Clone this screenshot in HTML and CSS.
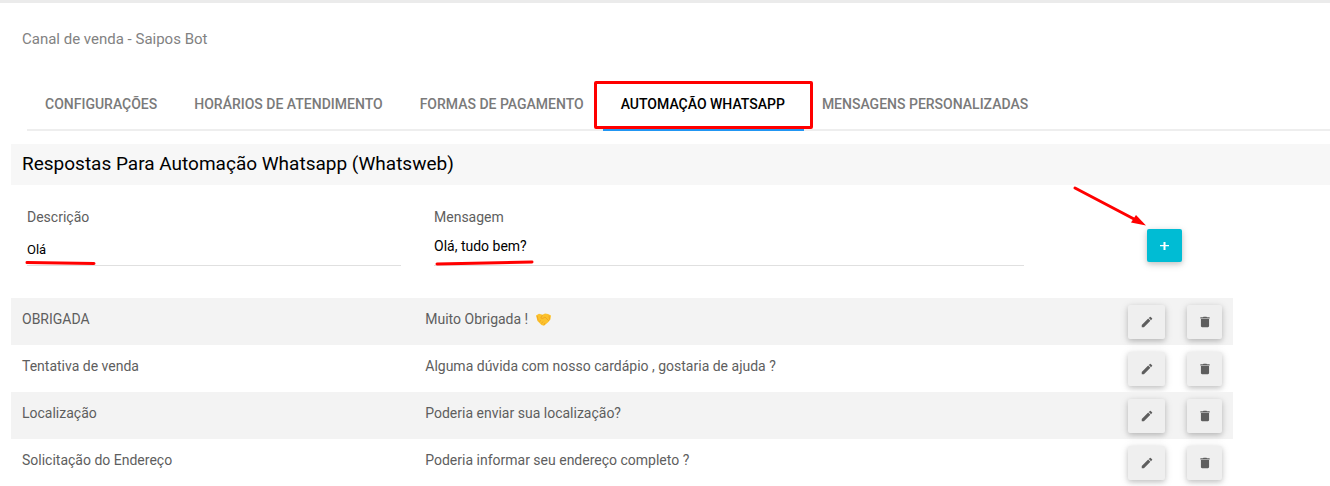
FILE: index.html
```html
<!DOCTYPE html>
<html lang="pt-BR">
<head>
    <meta charset="UTF-8">
    <meta name="viewport" content="width=device-width, initial-scale=1.0">
    <title>Canal de venda - Saipos Bot</title>
    <link rel="stylesheet" href="styles.css">
</head>
<body>
    <svg class="sprite" aria-hidden="true">
        <symbol id="icon-edit" viewBox="0 0 24 24">
            <path d="M3 17.25V21h3.75L17.81 9.94l-3.75-3.75L3 17.25zM20.71 7.04a1 1 0 0 0 0-1.41l-2.34-2.34a1 1 0 0 0-1.41 0l-1.83 1.83 3.75 3.75 1.83-1.83z"/>
        </symbol>
        <symbol id="icon-delete" viewBox="0 0 24 24">
            <path d="M5 19c0 1.100.9 2 2 2h10c1.100 0 2-.9 2-2V7H5v12zM20 4H15.500l-1-1h-5l-1 1H4v2h16V4z"/>
        </symbol>
    </svg>

    <header class="page-header">
        <h1>Canal de venda - Saipos Bot</h1>
    </header>

    <nav class="tabs">
        <a href="#configuracoes">Configurações</a>
        <a href="#horarios">Horários de atendimento</a>
        <a href="#pagamento">Formas de pagamento</a>
        <a href="#automacao" class="active">Automação Whatsapp<span class="mark-box"></span></a>
        <a href="#mensagens">Mensagens personalizadas</a>
    </nav>

    <main>
        <h2>Respostas Para Automação Whatsapp (Whatsweb)</h2>

        <form class="new-answer">
            <div class="field">
                <label for="descricao">Descrição</label>
                <input type="text" id="descricao" value="Olá">
                <svg class="mark-line" width="72" height="6" viewBox="0 0 72 6"><path d="M2 2.500L69 3.500"/></svg>
            </div>
            <div class="field">
                <label for="mensagem">Mensagem</label>
                <textarea id="mensagem" rows="1">Olá, tudo bem?</textarea>
                <svg class="mark-line mark-line-message" width="100" height="6" viewBox="0 0 100 6"><path d="M2 4L97 2"/></svg>
            </div>
            <div class="add">
                <button type="button" class="btn btn-add" aria-label="Adicionar">
                    <svg width="9" height="8" viewBox="0 0 9 8"><path d="M0 3h3.500V0h2v3H9v1.200H5.500V8h-2V4.200H0z"/></svg>
                </button>
                <svg class="mark-arrow" width="76" height="42" viewBox="0 0 76 42">
                    <path class="shaft" d="M3 3L62 34"/>
                    <path d="M74 40.500L64 30L59 37.500z"/>
                </svg>
            </div>
        </form>

        <table class="answers">
            <colgroup>
                <col class="col-description">
                <col>
                <col class="col-edit">
                <col class="col-delete">
            </colgroup>
            <tbody>
                <tr>
                    <td>OBRIGADA</td>
                    <td>Muito Obrigada !
                        <svg class="emoji" width="15" height="13" viewBox="0 0 15 13" role="img" aria-label="aperto de mãos">
                            <path fill="#fcc22d" d="M0 2.500L3 .8 6.500 1.800 9 .6l3 .4 3 1.600-.6 4-2 2.400L8 12.700 5.500 12 1.500 8z"/>
                            <path fill="none" stroke="#e8961e" stroke-width=".6" d="M1.200 3l1 4.500M6.500 2L4.800 5l2 .5 2.200-1.500 4 4M3.200 8.500L5 7.500M5.500 10.500l1.500-2M8 12l1-2M13 2.500l.5 4"/>
                        </svg>
                    </td>
                    <td class="action"><button type="button" class="btn btn-edit" aria-label="Editar"><svg><use href="#icon-edit"/></svg></button></td>
                    <td class="action"><button type="button" class="btn" aria-label="Excluir"><svg><use href="#icon-delete"/></svg></button></td>
                </tr>
                <tr>
                    <td>Tentativa de venda</td>
                    <td>Alguma dúvida com nosso cardápio , gostaria de ajuda ?</td>
                    <td class="action"><button type="button" class="btn btn-edit" aria-label="Editar"><svg><use href="#icon-edit"/></svg></button></td>
                    <td class="action"><button type="button" class="btn" aria-label="Excluir"><svg><use href="#icon-delete"/></svg></button></td>
                </tr>
                <tr>
                    <td>Localização</td>
                    <td>Poderia enviar sua localização?</td>
                    <td class="action"><button type="button" class="btn btn-edit" aria-label="Editar"><svg><use href="#icon-edit"/></svg></button></td>
                    <td class="action"><button type="button" class="btn" aria-label="Excluir"><svg><use href="#icon-delete"/></svg></button></td>
                </tr>
                <tr>
                    <td>Solicitação do Endereço</td>
                    <td>Poderia informar seu endereço completo ?</td>
                    <td class="action"><button type="button" class="btn btn-edit" aria-label="Editar"><svg><use href="#icon-edit"/></svg></button></td>
                    <td class="action"><button type="button" class="btn" aria-label="Excluir"><svg><use href="#icon-delete"/></svg></button></td>
                </tr>
            </tbody>
        </table>
    </main>
</body>
</html>
```
FILE: styles.css
```css
* {
    box-sizing: border-box;
}

body {
    margin: 0;
    border-top: 3px solid #ebebeb;
    background-color: #fff;
    color: #5e5e5e;
    font-family: Roboto, Arial, sans-serif;
    font-size: 14px;
    line-height: 20px;
}

.sprite {
    display: none;
}

.page-header {
    padding: 26px 22px 29px;
}

h1 {
    margin: 0;
    color: #828282;
    font-size: 15px;
    font-weight: 400;
}

/* tabs */
.tabs {
    display: flex;
    margin-left: 27px;
    box-shadow: inset 0 -2px 0 #eee;
}

.tabs a {
    position: relative;
    padding: 16px 19px 17px 18px;
    color: #7a7a7a;
    font-weight: 500;
    text-decoration: none;
    text-transform: uppercase;
    white-space: nowrap;
}

.tabs .active {
    box-shadow: inset 0 -2px 0 #2196f3;
    color: #000;
}

main {
    padding: 13px 0 0 11px;
}

h2 {
    margin: 0;
    padding: 10px 11px 11px;
    background-color: #f7f7f7;
    color: #000;
    font-size: 19px;
    font-weight: 400;
}

/* new answer form */
.new-answer {
    display: grid;
    grid-template-columns: 374fr 590fr 273fr;
    gap: 33px;
    padding: 22px 0 32px 16px;
}

.field {
    position: relative;
}

.field label {
    display: block;
}

.field input,
.field textarea {
    display: block;
    width: 100%;
    height: 39px;
    padding: 6px 0 0;
    border: 0;
    border-bottom: 1px solid #e0e0e0;
    border-radius: 0;
    background: none;
    color: #000;
    font-family: inherit;
    font-size: 13px;
    line-height: 20px;
    resize: none;
    outline: none;
    overflow: hidden;
}

.field textarea {
    padding-top: 9px;
    font-size: 14px;
}

.add {
    position: relative;
    justify-self: start;
    padding: 22px 0 0 90px;
}

.btn {
    display: flex;
    align-items: center;
    justify-content: center;
    width: 35px;
    height: 34px;
    padding: 0;
    border: 0;
    border-radius: 2px;
    background-color: #efefef;
    box-shadow: 0 2px 5px rgba(0, 0, 0, .16), 0 2px 10px rgba(0, 0, 0, .12);
    cursor: pointer;
}

.btn svg {
    width: 14px;
    height: 14px;
    fill: #5e5e5e;
}

.btn-edit {
    width: 37px;
}

.btn-add {
    height: 33px;
    background-color: #00bcd4;
}

.btn-add svg {
    width: 9px;
    height: 8px;
    fill: #fff;
}

/* saved answers */
.answers {
    width: calc(100% - 97px);
    border-collapse: collapse;
    table-layout: fixed;
}

.col-description {
    width: 33%;
}

.col-edit {
    width: 59px;
}

.col-delete {
    width: 46px;
}

.answers tr {
    height: 47px;
}

.answers tr:nth-child(odd) {
    background-color: #f3f3f3;
}

.answers td {
    padding: 11px 0 11px 11px;
    vertical-align: top;
}

.answers .action {
    padding: 7px 0 0;
}

.emoji {
    margin-left: 4px;
    vertical-align: -2px;
}

/* red marks */
.mark-box {
    position: absolute;
    inset: 3px -9px 2px;
    border: 3px solid #f00;
    border-radius: 2px;
}

.mark-line {
    position: absolute;
    left: -2px;
    bottom: 0;
}

.mark-line-message {
    left: 1px;
}

.mark-line path,
.mark-arrow .shaft {
    fill: none;
    stroke: #f00;
    stroke-width: 3;
    stroke-linecap: round;
}

.mark-arrow {
    position: absolute;
    top: -22px;
    left: 15px;
    fill: #f00;
}
```
